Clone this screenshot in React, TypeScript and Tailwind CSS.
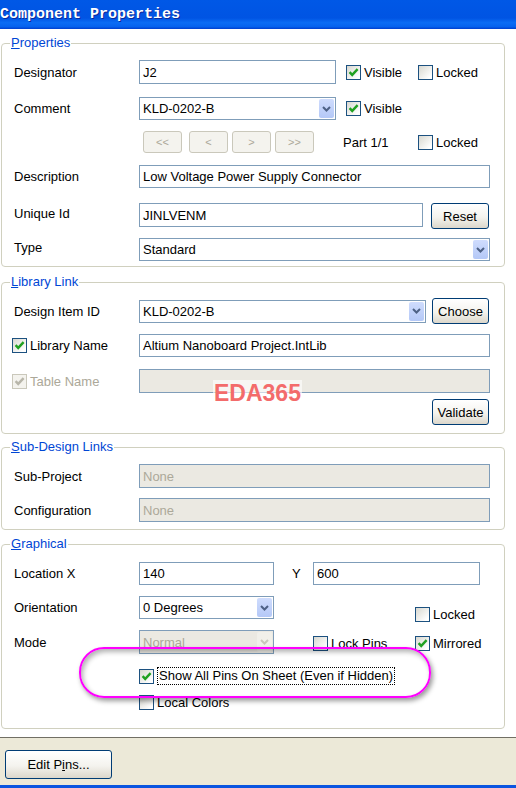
import type { ReactNode } from 'react'

function Check({ checked = false, disabled = false }: { checked?: boolean; disabled?: boolean }) {
  return (
    <span
      className={
        disabled
          ? 'relative inline-block h-[15px] w-[15px] shrink-0 border border-[#cac8bb] bg-[#f4f3ee]'
          : 'relative inline-block h-[15px] w-[15px] shrink-0 border border-[#1c5180] bg-[linear-gradient(135deg,#d8d8d0,#ffffff_85%)]'
      }
    >
      {checked && (
        <svg viewBox="0 0 13 13" className="absolute left-0 top-0 h-[13px] w-[13px]">
          <path
            d="M2.6 6.2 L5.2 8.9 L10.6 3.2"
            fill="none"
            stroke={disabled ? '#b8b6aa' : '#21a121'}
            strokeWidth="2.4"
          />
        </svg>
      )}
    </span>
  )
}

function CheckLabel({
  label,
  checked,
  disabled,
}: {
  label: ReactNode
  checked?: boolean
  disabled?: boolean
}) {
  return (
    <span className={disabled ? 'flex items-center gap-[3px] text-[#aca899]' : 'flex items-center gap-[3px]'}>
      <Check checked={checked} disabled={disabled} />
      <span>{label}</span>
    </span>
  )
}

function TextBox({ className, value, disabled }: { className: string; value?: string; disabled?: boolean }) {
  return (
    <div
      className={`flex shrink-0 items-center border border-[#7f9db9] pl-[3px] ${
        disabled ? 'bg-[#ebe9e2] text-[#aca899]' : 'bg-white'
      } ${className}`}
    >
      {value}
    </div>
  )
}

function Arrow({ disabled }: { disabled?: boolean }) {
  return (
    <div
      className={
        disabled
          ? 'my-[1px] mr-[1px] flex w-[15px] items-center justify-center self-stretch rounded-[2px] bg-[#f1f0ea]'
          : 'my-[1px] mr-[1px] flex w-[15px] items-center justify-center self-stretch rounded-[2px] bg-[linear-gradient(to_bottom,#cfdcfd,#b4c8f7)]'
      }
    >
      <svg viewBox="0 0 9 6" className="h-[6px] w-[9px]">
        <path d="M1 1 L4.5 4.5 L8 1" fill="none" stroke={disabled ? '#c9c7ba' : '#4d6185'} strokeWidth="2" />
      </svg>
    </div>
  )
}

function Select({ className, value, disabled }: { className: string; value: string; disabled?: boolean }) {
  return (
    <div
      className={`flex shrink-0 items-center border border-[#7f9db9] ${
        disabled ? 'bg-[#ebe9e2] text-[#aca899]' : 'bg-white'
      } ${className}`}
    >
      <span className="flex-1 pl-[3px]">{value}</span>
      <Arrow disabled={disabled} />
    </div>
  )
}

function XpButton({ className, children }: { className: string; children: ReactNode }) {
  return (
    <div
      className={`flex shrink-0 items-center justify-center rounded-[3px] border border-[#003c74] bg-[linear-gradient(to_bottom,#ffffff,#f4f3ee_55%,#dcd7cb)] ${className}`}
    >
      {children}
    </div>
  )
}

function NavButton({ children }: { children: ReactNode }) {
  return (
    <div className="flex h-[22px] w-[39px] shrink-0 items-center justify-center rounded-[3px] border border-[#cac8bb] bg-[#f4f3ee] text-[11px] text-[#aca899]">
      {children}
    </div>
  )
}

function Group({ title, className, children }: { title: ReactNode; className: string; children: ReactNode }) {
  return (
    <div className={`relative ml-[1px] w-[504px] rounded-[4px] border border-[#d0d0bf] pl-[12px] ${className}`}>
      <span className="absolute left-[8px] top-[-9px] bg-white px-[1px] leading-[15px] text-[#0046d5]">{title}</span>
      {children}
    </div>
  )
}

function Label({ children, className = '' }: { children: ReactNode; className?: string }) {
  return <div className={`flex w-[125px] shrink-0 items-center self-stretch ${className}`}>{children}</div>
}

export default function App() {
  return (
    <div className="relative flex h-[788px] w-[516px] flex-col overflow-hidden bg-white font-['Liberation_Sans',Arial,sans-serif] text-[13px] leading-[15px] text-black">
      {/* title bar */}
      <div className="flex h-[29px] shrink-0 items-center bg-[linear-gradient(to_bottom,#0058e6_0%,#0054e3_62%,#0b6cf4_78%,#0562ee_92%,#003ecd_100%)] font-['Liberation_Mono',monospace] text-[15px] font-bold text-white [text-shadow:1px_1px_0_#0a2a9c]">
        Component Properties
      </div>

      <div className="flex h-[708px] shrink-0 flex-col bg-white pt-[14px]">
        <Group
          title={
            <>
              <span className="underline">P</span>roperties
            </>
          }
          className="h-[224px]"
        >
          <div className="mt-[16px] flex h-[24px] items-center">
            <Label>Designator</Label>
            <TextBox className="h-[24px] w-[197px]" value="J2" />
            <div className="ml-[10px] w-[72px]">
              <CheckLabel label="Visible" checked />
            </div>
            <CheckLabel label="Locked" />
          </div>
          <div className="mt-[13px] flex h-[23px] items-center">
            <Label>Comment</Label>
            <Select className="h-[23px] w-[197px]" value="KLD-0202-B" />
            <div className="ml-[10px]">
              <CheckLabel label="Visible" checked />
            </div>
          </div>
          <div className="mt-[11px] flex h-[22px] items-center">
            <div className="w-[129px] shrink-0" />
            <NavButton>&lt;&lt;</NavButton>
            <div className="ml-[7px]">
              <NavButton>&lt;</NavButton>
            </div>
            <div className="ml-[4px]">
              <NavButton>&gt;</NavButton>
            </div>
            <div className="ml-[4px]">
              <NavButton>&gt;&gt;</NavButton>
            </div>
            <span className="ml-[29px] w-[75px] shrink-0">Part 1/1</span>
            <CheckLabel label="Locked" />
          </div>
          <div className="mt-[12px] flex h-[23px] items-center">
            <Label>Description</Label>
            <TextBox className="h-[23px] w-[351px]" value="Low Voltage Power Supply Connector" />
          </div>
          <div className="mt-[15px] flex h-[26px] items-start">
            <Label className="pb-[6px]">Unique Id</Label>
            <TextBox className="h-[24px] w-[284px]" value="JINLVENM" />
            <XpButton className="ml-[8px] h-[26px] w-[58px]">Reset</XpButton>
          </div>
          <div className="mt-[9px] flex h-[23px] items-center">
            <Label className="pb-[4px]">Type</Label>
            <Select className="h-[23px] w-[351px]" value="Standard" />
          </div>
        </Group>

        <Group
          title={
            <>
              <span className="underline">L</span>ibrary Link
            </>
          }
          className="mt-[15px] h-[152px]"
        >
          <div className="mt-[15px] flex h-[26px] items-center">
            <Label>Design Item ID</Label>
            <Select className="h-[23px] w-[287px]" value="KLD-0202-B" />
            <XpButton className="ml-[6px] h-[26px] w-[57px]">Choose</XpButton>
          </div>
          <div className="mt-[10px] flex h-[23px] items-center">
            <Label className="ml-[-2px] w-[127px]">
              <CheckLabel label="Library Name" checked />
            </Label>
            <TextBox className="h-[23px] w-[351px]" value="Altium Nanoboard Project.IntLib" />
          </div>
          <div className="mt-[12px] flex h-[24px] items-center">
            <Label className="ml-[-2px] w-[127px]">
              <CheckLabel label="Table Name" checked disabled />
            </Label>
            <TextBox className="h-[24px] w-[351px]" disabled />
          </div>
          <div className="mt-[6px] flex h-[26px]">
            <XpButton className="ml-[418px] h-[26px] w-[57px]">Validate</XpButton>
          </div>
        </Group>

        <Group
          title={
            <>
              <span className="underline">S</span>ub-Design Links
            </>
          }
          className="mt-[13px] h-[83px]"
        >
          <div className="mt-[16px] flex h-[24px] items-center">
            <Label>Sub-Project</Label>
            <TextBox className="h-[24px] w-[351px]" value="None" disabled />
          </div>
          <div className="mt-[10px] flex h-[24px] items-center">
            <Label>Configuration</Label>
            <TextBox className="h-[24px] w-[351px]" value="None" disabled />
          </div>
        </Group>

        <Group
          title={
            <>
              <span className="underline">G</span>raphical
            </>
          }
          className="mt-[14px] h-[185px]"
        >
          <div className="mt-[17px] flex h-[23px] items-center">
            <Label>Location X</Label>
            <TextBox className="h-[23px] w-[135px]" value="140" />
            <span className="ml-[18px] w-[21px] shrink-0">Y</span>
            <TextBox className="h-[23px] w-[167px]" value="600" />
          </div>
          <div className="mt-[11px] flex h-[23px] items-start">
            <Label className="h-[23px]">Orientation</Label>
            <Select className="h-[23px] w-[135px]" value="0 Degrees" />
            <div className="ml-[141px] mt-[11px]">
              <CheckLabel label="Locked" />
            </div>
          </div>
          <div className="mt-[11px] flex h-[24px] items-start">
            <Label className="h-[24px]">Mode</Label>
            <Select className="h-[24px] w-[135px]" value="Normal" disabled />
            <div className="ml-[39px] mt-[6px] w-[102px] shrink-0">
              <CheckLabel label="Lock Pins" />
            </div>
            <div className="mt-[6px]">
              <CheckLabel label="Mirrored" checked />
            </div>
          </div>
          <div className="mt-[13px] flex h-[18px] items-center pl-[125px]">
            <Check checked />
            <span className="ml-[3px] border border-dotted border-black px-[1px] leading-[16px]">
              Show All Pins On Sheet (Even if Hidden)
            </span>
          </div>
          <div className="mt-[10px] flex h-[15px] items-center pl-[125px]">
            <CheckLabel label="Local Colors" />
          </div>
        </Group>
      </div>

      <div className="h-[48px] shrink-0 border-t border-[#716f64] bg-[#ece9d8] pl-[5px] pt-[12px]">
        <XpButton className="h-[29px] w-[107px]">
          <span>
            Edit P<span className="underline">i</span>ns...
          </span>
        </XpButton>
      </div>
      <div className="h-[3px] shrink-0 bg-[#0a55e0]" />

      {/* watermark */}
      <div className="absolute left-[213px] top-[380px] bg-white/60 px-[1px] text-[23px] font-bold leading-[26px] text-[#f36b6b]">
        EDA365
      </div>
      {/* highlight ring */}
      <div className="absolute left-[79px] top-[647px] h-[51px] w-[352px] rounded-[25px] border-2 border-[#ff00ff] shadow-[2px_3px_5px_rgba(0,0,0,0.4),inset_2px_3px_5px_rgba(0,0,0,0.3)]" />
    </div>
  )
}
